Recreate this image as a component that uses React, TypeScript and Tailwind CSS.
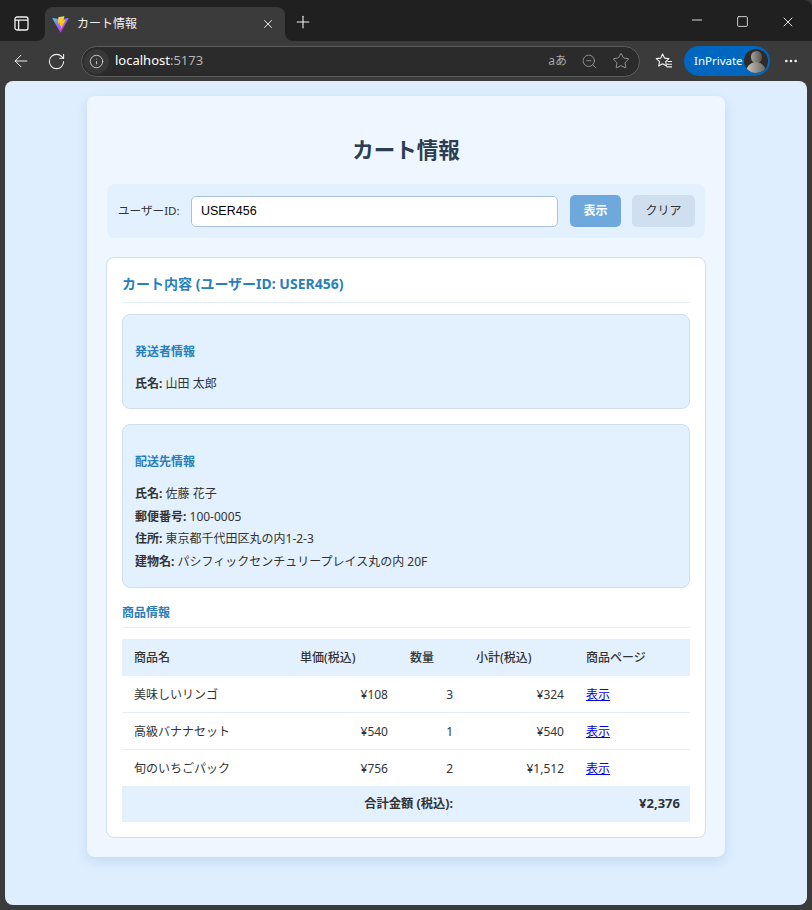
import React from "react";
import { ArrowLeft, RotateCw, Info, ZoomOut, Star, Plus, X, Minus, Square, MoreHorizontal } from "lucide-react";

const sans = "[font-family:'Noto_Sans','Noto_Sans_CJK_JP',sans-serif]";

function ViteLogo() {
  return (
    <svg width="17" height="17" viewBox="0 0 410 404" fill="none">
      <defs>
        <linearGradient id="va" x1="6" y1="33" x2="235" y2="344" gradientUnits="userSpaceOnUse">
          <stop stopColor="#41D1FF" />
          <stop offset="1" stopColor="#BD34FE" />
        </linearGradient>
        <linearGradient id="vb" x1="194" y1="8" x2="236" y2="292" gradientUnits="userSpaceOnUse">
          <stop stopColor="#FFEA83" />
          <stop offset="0.08" stopColor="#FFDD35" />
          <stop offset="1" stopColor="#FFA800" />
        </linearGradient>
      </defs>
      <path d="M399.641 59.525L215.643 388.545C211.844 395.338 202.084 395.378 198.228 388.618L10.582 59.556C6.381 52.19 12.68 43.267 21.028 44.759L205.223 77.682C206.398 77.892 207.601 77.89 208.776 77.676L389.119 44.806C397.439 43.289 403.768 52.143 399.641 59.525Z" fill="url(#va)" />
      <path d="M292.965 1.574L156.801 28.255C154.563 28.694 152.906 30.59 152.771 32.866L144.395 174.33C144.198 177.662 147.258 180.248 150.51 179.498L188.42 170.749C191.967 169.931 195.172 173.055 194.443 176.622L183.18 231.775C182.422 235.487 185.907 238.661 189.532 237.56L212.947 230.446C216.577 229.344 220.065 232.527 219.297 236.242L201.398 322.875C200.278 328.294 207.486 331.249 210.492 326.603L212.5 323.5L323.454 102.072C325.312 98.365 322.108 94.137 318.036 94.923L279.014 102.454C275.347 103.161 272.227 99.746 273.262 96.158L298.731 7.867C299.767 4.273 296.636 0.855 292.965 1.574Z" fill="url(#vb)" />
    </svg>
  );
}

function SidebarIcon() {
  return (
    <svg width="15" height="15" viewBox="0 0 15 15" fill="none" stroke="#f2f2f2" strokeWidth="1.3">
      <rect x="1" y="1" width="13" height="13" rx="2" />
      <path d="M1 4.2h13M4.6 4.2V14" />
    </svg>
  );
}

function FavoritesIcon() {
  return (
    <svg width="18" height="18" viewBox="0 0 18 18" fill="none" stroke="#f2f2f2" strokeWidth="1.15">
      <path d="M7.6 2l1.9 4.1 4.4.5-3.2 3 .8 4.4-3.9-2.2-3.9 2.2.9-4.4-3.3-3 4.5-.5z" strokeLinejoin="round" />
      <path d="M12.5 9.5h4.5M12 12.2h5M11.5 14.8h5.5" />
    </svg>
  );
}

function Avatar() {
  return (
    <span className="w-[24px] h-[24px] rounded-full bg-[#2d2a28] overflow-hidden flex flex-col items-center">
      <span className="w-[11px] h-[13px] mt-[2px] rounded-full bg-gradient-to-r from-[#a8a49c] to-[#55524e]" />
      <span className="w-[20px] h-[12px] -mt-[1px] rounded-t-full bg-gradient-to-r from-[#c9c6c0] to-[#6a6762]" />
    </span>
  );
}

function Field({ label, value }: { label: string; value: string }) {
  return (
    <p className="h-[22.5px] leading-[22.5px] whitespace-nowrap">
      <strong className="font-bold text-[#333]">{label}:</strong> {value}
    </p>
  );
}

const rows = [
  { name: "美味しいリンゴ", price: "¥108", qty: "3", sub: "¥324", h: "h-[37px] pt-[1px] border-b border-[#e3eef9]" },
  { name: "高級バナナセット", price: "¥540", qty: "1", sub: "¥540", h: "h-[37px] pt-[1px] border-b border-[#e3eef9]" },
  { name: "旬のいちごパック", price: "¥756", qty: "2", sub: "¥1,512", h: "h-[36px] pt-[2px]" },
];

export default function App() {
  return (
    <div className={`w-[812px] h-[910px] overflow-hidden bg-[#3b3b3b] flex flex-col ${sans}`}>
      {/* tab strip */}
      <div className="h-[41px] flex shrink-0 text-[#f2f2f2]">
        <div className="w-[45px] bg-[#202020] rounded-br-lg flex items-center pt-[5px] pl-[14px]">
          <SidebarIcon />
        </div>
        <div className="w-[240px] bg-[#202020]">
          <div className="mt-[7px] h-[34px] bg-[#3b3b3b] rounded-t-lg flex items-center pl-[7px] pr-[10px]">
            <ViteLogo />
            <span className="ml-[8px] text-[12px] flex-1">カート情報</span>
            <X size={14} strokeWidth={1.6} />
          </div>
        </div>
        <div className="flex-1 bg-[#202020] rounded-bl-lg rounded-tr-lg flex items-center justify-between pt-[2px]">
          <Plus size={20} strokeWidth={1.3} className="ml-[8px]" />
          <div className="flex items-center gap-[31px] mr-[16px]">
            <Minus size={16} strokeWidth={1.3} className="-mt-[4px]" />
            <Square size={13} strokeWidth={1.5} />
            <X size={16} strokeWidth={1.4} />
          </div>
        </div>
      </div>

      {/* toolbar */}
      <div className="h-[40px] shrink-0 flex items-center text-[#f2f2f2]">
        <ArrowLeft size={20} strokeWidth={1.2} className="ml-[11px]" />
        <RotateCw size={19} strokeWidth={1.3} className="ml-[16px]" />
        <div className="ml-[15px] w-[559px] h-[31px] rounded-full bg-[#2b2b2b] border border-[#5c5c5c] flex items-center">
          <span className="ml-[2px] w-[25px] h-[25px] rounded-full bg-[#383838] flex items-center justify-center">
            <Info size={15} strokeWidth={1.4} className="text-[#d6d6d6]" />
          </span>
          <span className="ml-[6px] text-[13px] text-white">
            localhost<span className="text-[#b5b5b5]">:5173</span>
          </span>
          <div className="ml-auto mr-[9px] flex items-center gap-[14px] text-[#a8a8a8]">
            <span className="text-[12px] leading-none">aあ</span>
            <ZoomOut size={17} strokeWidth={1.1} />
            <Star size={18} strokeWidth={1.1} />
          </div>
        </div>
        <span className="ml-[15px] flex"><FavoritesIcon /></span>
        <div className="ml-[11px] w-[86px] h-[30px] rounded-full bg-[#0067c0] flex items-center justify-between pl-[10px] pr-[2px]">
          <span className="text-[11.5px] text-white">InPrivate</span>
          <Avatar />
        </div>
        <MoreHorizontal size={16} className="ml-[13px]" />
      </div>

      {/* page */}
      <div className="mx-[5px] h-[824px] shrink-0 rounded-lg bg-[#deeeff] pt-[15px]">
        <div className="mx-[82px] h-[761px] rounded-lg bg-[#eef6ff] shadow-[0_4px_12px_rgba(90,130,180,0.2)] px-[20px] pt-[38px]">
          <h1 className="text-center text-[21.5px] leading-[32px] font-bold text-[#2c3e50]">カート情報</h1>

          <div className="mt-[18px] h-[54px] rounded-lg bg-[#e3f0fd] flex items-center pl-[11px] pr-[10px]">
            <label className="text-[11.6px] text-[#333] w-[73px]">ユーザーID:</label>
            <input
              readOnly
              value="USER456"
              className="w-[367px] h-[31px] rounded-[5px] border border-[#a9c1dc] bg-white px-[9px] text-[12.5px] text-black [font-family:'Liberation_Sans',sans-serif] outline-none"
            />
            <button className="ml-[12px] w-[51px] h-[32px] rounded-[5px] bg-[#6fa8dc] text-white text-[12px] font-bold">表示</button>
            <button className="ml-[11px] w-[63px] h-[32px] rounded-[5px] bg-[#d0dfef] text-[#333] text-[12px]">クリア</button>
          </div>

          <div className="mt-[19px] -mx-[1px] h-[581px] rounded-lg bg-white border border-[#cfdfee] px-[15px] pt-[14px] text-[12px] text-[#333]">
            <h2 className="h-[31px] text-[14px] leading-[24px] font-bold text-[#2980b9] border-b border-[#e3eef9]">
              カート内容 (ユーザーID: USER456)
            </h2>

            <section className="mt-[11px] h-[95px] rounded-lg bg-[#e3f0fd] border border-[#cfdfee] px-[12px] pt-[27px]">
              <h3 className="h-[20px] text-[12px] leading-[20px] font-bold text-[#2980b9]">発送者情報</h3>
              <div className="mt-[11px]">
                <Field label="氏名" value="山田 太郎" />
              </div>
            </section>

            <section className="mt-[15px] h-[164px] rounded-lg bg-[#e3f0fd] border border-[#cfdfee] px-[12px] pt-[27px]">
              <h3 className="h-[20px] text-[12px] leading-[20px] font-bold text-[#2980b9]">配送先情報</h3>
              <div className="mt-[11px]">
                <Field label="氏名" value="佐藤 花子" />
                <Field label="郵便番号" value="100-0005" />
                <Field label="住所" value="東京都千代田区丸の内1-2-3" />
                <Field label="建物名" value="パシフィックセンチュリープレイス丸の内 20F" />
              </div>
            </section>

            <h3 className="mt-[15px] h-[25px] text-[12px] leading-[20px] font-bold text-[#2980b9] border-b border-[#e3eef9]">商品情報</h3>

            <table className="mt-[11px] w-[568px] table-fixed border-separate border-spacing-0">
              <colgroup>
                <col className="w-[166px]" />
                <col className="w-[112px]" />
                <col className="w-[64px]" />
                <col className="w-[112px]" />
                <col className="w-[114px]" />
              </colgroup>
              <thead>
                <tr className="h-[37px] bg-[#e3f0fd] text-left">
                  <th className="pl-[12px] font-medium">商品名</th>
                  <th className="pl-[12px] font-medium">単価(税込)</th>
                  <th className="pl-[10px] font-medium">数量</th>
                  <th className="pl-[12px] font-medium">小計(税込)</th>
                  <th className="pl-[10px] font-medium">商品ページ</th>
                </tr>
              </thead>
              <tbody>
                {rows.map((r) => (
                  <tr key={r.name}>
                    <td className={`pl-[12px] ${r.h}`}>{r.name}</td>
                    <td className={`pr-[12px] text-right ${r.h}`}>{r.price}</td>
                    <td className={`pr-[11px] text-right ${r.h}`}>{r.qty}</td>
                    <td className={`pr-[12px] text-right ${r.h}`}>{r.sub}</td>
                    <td className={`pl-[10px] ${r.h}`}>
                      <a href="#" className="text-[#0000ee] underline">表示</a>
                    </td>
                  </tr>
                ))}
              </tbody>
              <tfoot>
                <tr className="h-[36px] bg-[#e3f0fd] font-bold">
                  <td colSpan={3} className="pr-[11px] text-right text-[12.3px]">合計金額 (税込):</td>
                  <td colSpan={2} className="pr-[10px] text-right text-[13px]">¥2,376</td>
                </tr>
              </tfoot>
            </table>
          </div>
        </div>
      </div>
    </div>
  );
}
